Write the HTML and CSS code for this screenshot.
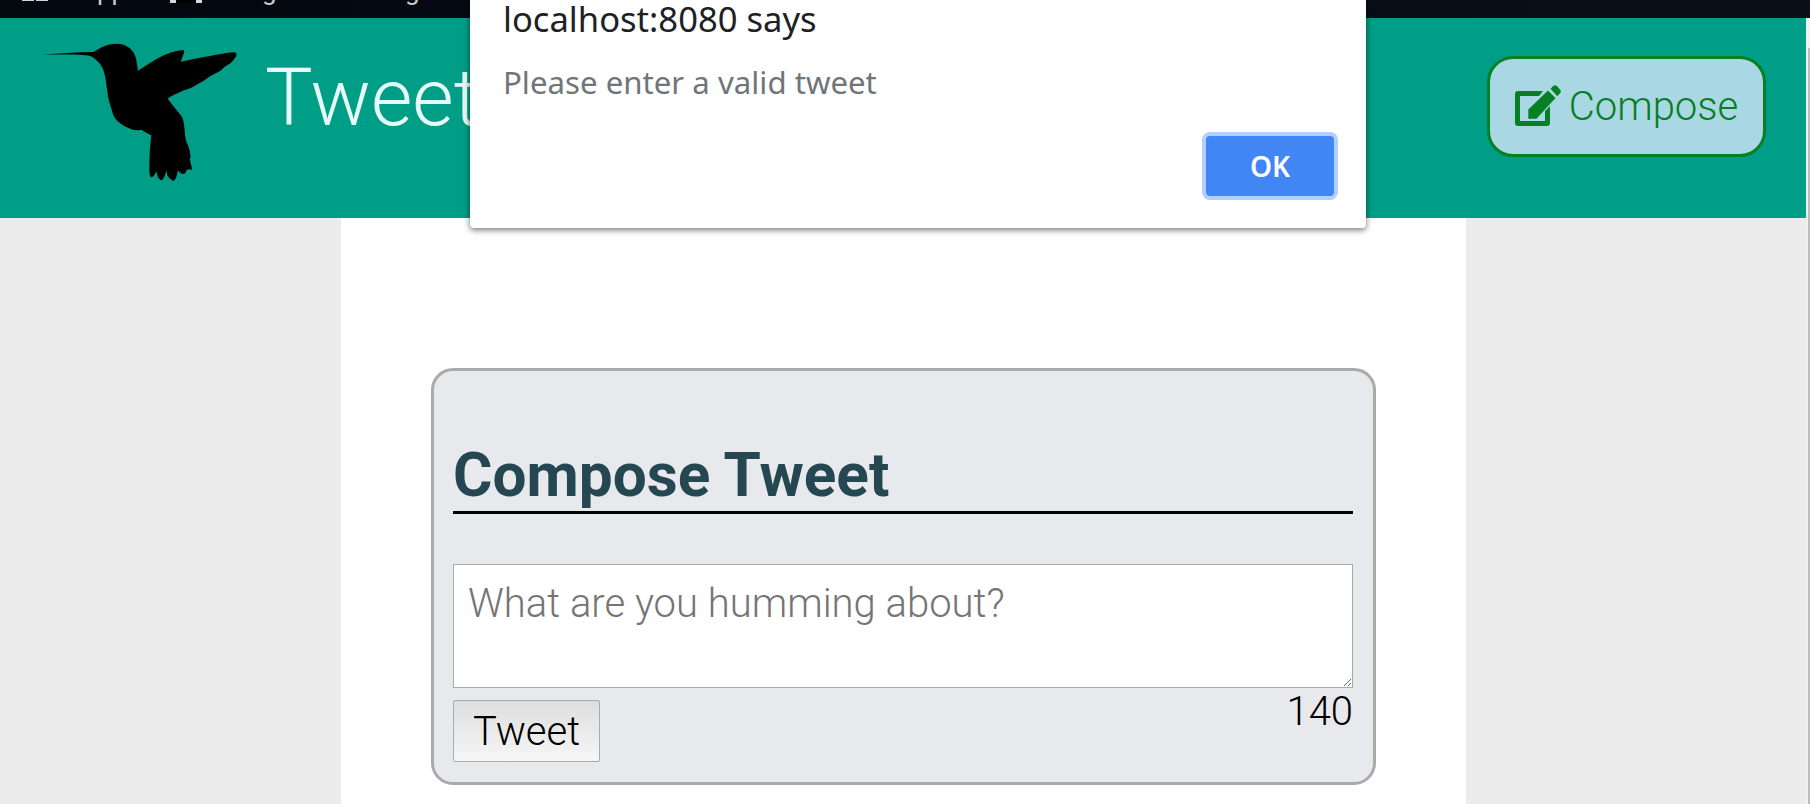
FILE: index.html
```html
<!DOCTYPE html>
<html lang="en">
<head>
<meta charset="utf-8">
<title>Tweeter</title>
<link rel="stylesheet" href="styles.css">
</head>
<body>
<div class="os-bar">
  <span class="apps-grid"><i></i><i></i></span>
  <span class="bm bm-apps">Apps</span>
  <span class="bm-bracket"><i></i></span>
  <span class="bm bm-g1">g</span>
  <span class="bm bm-g2">g</span>
</div>
<div class="content">
  <header class="nav">
    <div class="brand">
      <svg class="bird" viewBox="0 0 660 480" aria-hidden="true"><path d="M38 75 C90 70 140 67 190 66 L215 52 C235 42 260 39 280 44 C300 50 316 68 319 90 L324 122 C350 105 385 82 410 72 C428 66 445 61 461 60 L463 66 L452 95 C480 89 510 83 540 78 C565 74 590 68 612 67 C618 67 621 72 619 77 C613 88 607 96 597 103 C587 108 580 114 572 122 C560 128 548 134 537 141 C525 150 510 159 498 165 C480 178 465 178 452 185 C440 191 425 196 413 206 C425 222 440 240 452 255 C462 268 462 285 464 300 C465 318 467 330 472 342 C478 355 480 365 482 382 L479 387 L487 420 C478 416 474 418 470 420 C468 428 463 433 458 432 C452 431 447 426 444 421 C441 436 438 449 431 453 C424 452 417 444 412 436 L409 421 C406 435 402 447 394 451 C387 449 382 441 379 424 C375 433 372 440 365 442 C359 441 358 430 358 418 C358 380 360 345 364 316 C352 310 343 305 334 299 C325 302 310 302 298 295 C280 288 265 278 254 263 C247 252 246 240 241 226 C235 210 233 190 230 170 C228 150 224 130 218 115 C210 98 195 85 181 78 C150 73 95 73 38 75 Z"/></svg>
      <span class="brand-name">Tweeter</span>
    </div>
    <button class="compose-btn">
      <svg class="pen" viewBox="0 0 46 41" aria-hidden="true"><path d="M3 6H28L24 11H5V36H30V26L35 21V38A3 3 0 0 1 32 41H3A3 3 0 0 1 0 38V9A3 3 0 0 1 3 6Z"/><path d="M13.300 24.500L33 5.500L40.500 13L21.500 33.700H13.300Z"/><path d="M35.500 3.800L38 1.200Q40 -0.500 42 1.200L45 4.500Q46.500 6.500 45 8.300L42.300 11.200Z"/></svg>
      <span>Compose</span>
    </button>
  </header>
  <main class="page">
    <section class="composer">
      <h2 class="composer-title">Compose Tweet</h2>
      <form class="composer-form">
        <textarea class="composer-input" placeholder="What are you humming about?"></textarea>
        <div class="composer-foot">
          <button type="button" class="tweet-btn">Tweet</button>
          <output class="counter">140</output>
        </div>
      </form>
    </section>
  </main>
</div>
<div class="scroll-thumb"></div>
<div class="dialog">
  <div class="dialog-title">localhost:8080 says</div>
  <div class="dialog-msg">Please enter a valid tweet</div>
  <div class="dialog-actions"><button class="ok-btn">OK</button></div>
</div>
</body>
</html>
```
FILE: styles.css
```css
* { box-sizing: border-box; }
html, body { margin: 0; height: 804px; overflow: hidden; }
body { background: #f1f1f1; font-family: Roboto, sans-serif; font-weight: 300; position: relative; }

.os-bar { height: 18px; background: linear-gradient(90deg, #03080f, #050a14 40%, #0a0f1a); display: flex; align-items: flex-start; padding-left: 22px; overflow: hidden; }
.apps-grid { width: 58px; display: flex; gap: 2px; }
.apps-grid i { width: 12px; height: 1px; background: #cfd2d6; }
.bm { font: 400 26px/26px Roboto, sans-serif; color: #c9ccd0; margin-top: -22px; }
.bm-apps { width: 90px; }
.bm-bracket { width: 32px; height: 3px; border: 3px solid #d8d8d8; border-top: 0; display: flex; justify-content: center; background: #d8d8d8; }
.bm-bracket i { width: 20px; height: 3px; background: #000; }
.bm-g1 { margin-left: 60px; width: 13px; }
.bm-g2 { margin-left: 130px; width: 13px; }

.content { width: 1806px; height: 786px; background: #ececec; }
.nav { height: 200px; background: #009e87; display: flex; justify-content: space-between; align-items: flex-start; padding: 12px 40px 0 30px; }
.brand { display: flex; align-items: flex-start; gap: 15px; }
.bird { width: 220px; height: 160px; display: block; }
.brand-name { font-size: 80px; color: #e6fbf7; line-height: 94px; margin-top: 21px; }
.compose-btn { width: 279px; height: 101px; margin-top: 26px; background: #aad7e4; border: 3px solid #068022; border-radius: 26px; color: #068022; font: 300 40px Roboto, sans-serif; display: flex; align-items: center; justify-content: center; gap: 8px; padding: 0; }
.pen { width: 46px; height: 41px; fill: currentColor; margin-top: -2px; }

.page { width: 1125px; height: 586px; margin-left: 341px; background: #fff; padding: 150px 90px 0; }
.composer { height: 417px; background: #e7e9ed; border: 3px solid #aaa; border-radius: 22px; padding: 70px 20px 0 19px; }
.composer-title { margin: 0; font: 700 60.300px/70px Roboto, sans-serif; color: #244751; border-bottom: 3px solid #000; }
.composer-form { margin-top: 50px; }
.composer-input { display: block; width: 100%; height: 124px; padding: 15px 14px 0; font: 300 40px/48px Roboto, sans-serif; border: 1px solid #aaa; background: #fff; }
.composer-foot { display: flex; justify-content: space-between; align-items: flex-start; }
.tweet-btn { margin-top: 12px; width: 147px; height: 62px; padding: 0; font: 300 40px Roboto, sans-serif; color: #000; border: 1px solid #aaa; border-radius: 2px; background: linear-gradient(#dedede, #f6f6f6); }
.counter { font-size: 40px; line-height: 46px; color: #000; margin-top: 1px; }

.scroll-thumb { position: absolute; right: 0; top: 48px; bottom: 0; width: 2px; background: #bdbdbd; }

.dialog { position: absolute; left: 470px; top: 0; width: 896px; height: 228px; background: #fff; border-radius: 0 0 4px 4px; box-shadow: 0 2px 6px rgba(0,0,0,.55); padding: 0 32px 0 33px; font-family: "Noto Sans", sans-serif; }
.dialog-title { font-size: 34.600px; line-height: 37px; font-weight: 400; color: #202124; }
.dialog-msg { font-size: 31.200px; line-height: 42px; margin-top: 24px; font-weight: 400; color: #70757a; }
.dialog-actions { display: flex; justify-content: flex-end; margin-top: 33px; }
.ok-btn { width: 128px; height: 60px; background: #4285f4; color: #fff; font: 600 28px "Noto Sans", sans-serif; border: 0; padding: 0; border-radius: 4px; box-shadow: 0 0 0 4px #b3d0fd; }
```
